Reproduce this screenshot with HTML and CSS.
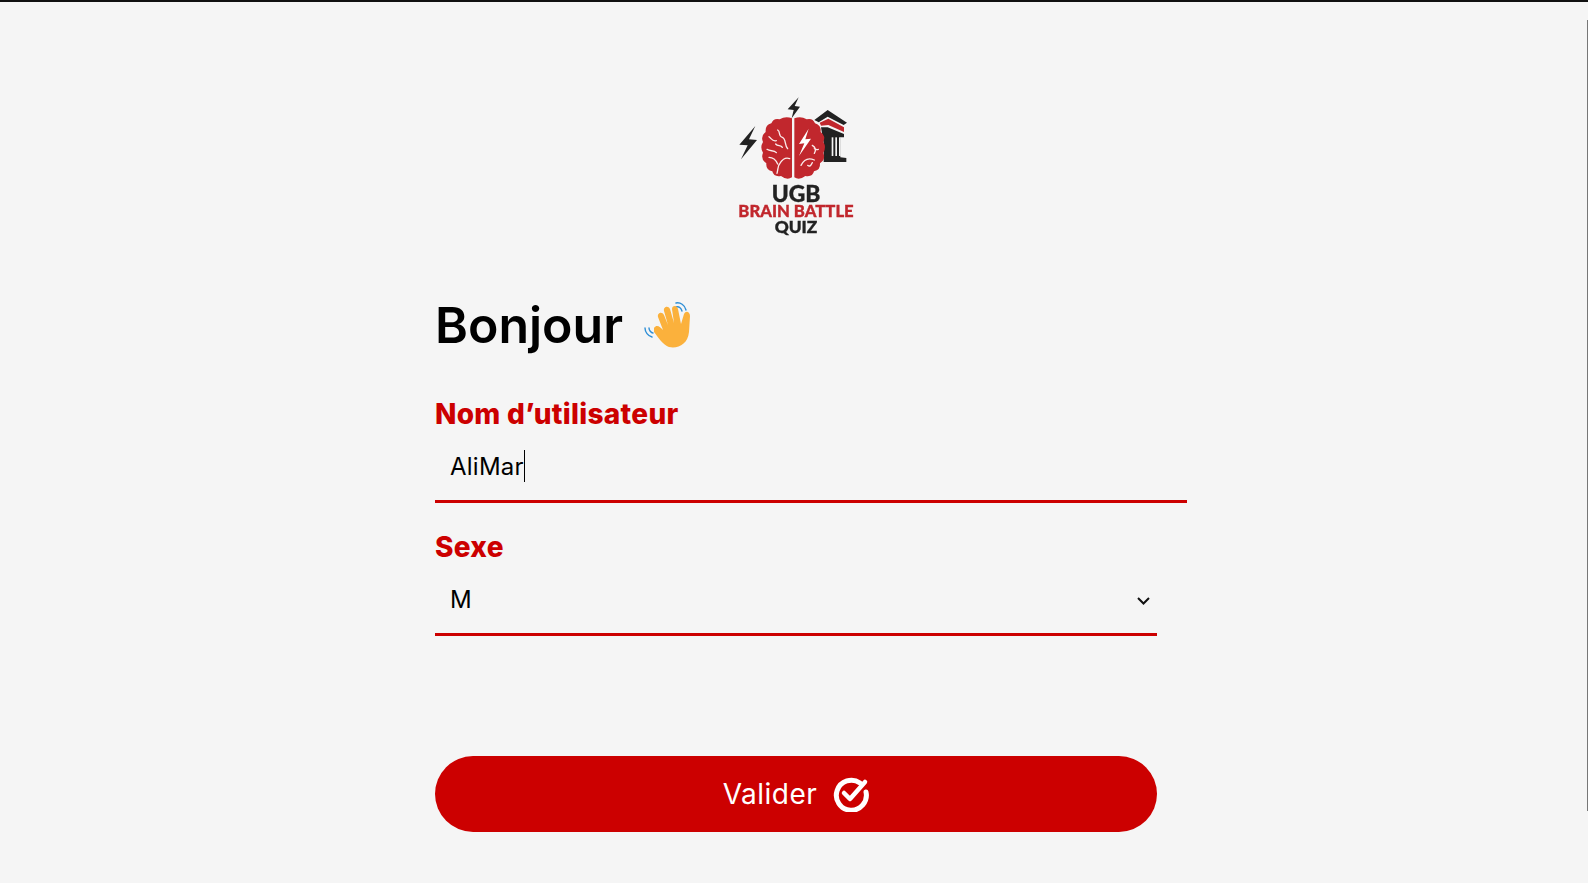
FILE: index.html
```html
<!DOCTYPE html>
<html lang="fr">
<head>
    <meta charset="UTF-8">
    <meta name="viewport" content="width=device-width, initial-scale=1.0">
    <title>UGB Brain Battle Quiz</title>
    <link rel="stylesheet" href="styles.css">
</head>
<body>

    <div class="scroll-line"></div>

    <div class="container">

        <!-- Logo -->
        <svg class="logo" viewBox="117 0 400 570" role="img" aria-label="UGB Brain Battle Quiz">
            <polygon fill="#222" points="195,168 147,224 172,226 152,268 200,210 176,208"/>
            <polygon fill="#222" points="325,82 292,118 310,120 304,145 329,110 313,108"/>
            <path fill="#222" d="M372,150 L412,120 L470,158 L460,165 L412,140 L385,157 Z"/>
            <path fill="#c1272d" d="M388,158 L414,146 L461,172 L461,186 L414,165 L392,167 Z"/>
            <path fill="#222" d="M392,172 L412,172 L461,192 L461,202 L450,202 L450,262 L468,264 L468,276 L400,276 L400,220 Z"/>
            <g fill="#f5f5f5">
                <rect x="424" y="202" width="5" height="56"/>
                <rect x="435" y="202" width="5" height="56"/>
                <rect x="446" y="202" width="5" height="56"/>
            </g>
            <path fill="#c1272d" d="M305,145 Q285,138 268,148 Q250,143 243,160 Q224,165 226,186 Q210,198 218,216 Q208,232 218,248 Q210,268 228,280 Q226,300 246,304 Q250,322 272,318 Q290,332 305,322 Z"/>
            <path fill="#c1272d" d="M312,145 Q332,138 349,148 Q367,143 374,160 Q393,165 391,186 Q407,198 399,216 Q409,232 399,248 Q407,268 389,280 Q391,300 371,304 Q367,322 345,318 Q327,332 312,322 Z"/>
            <g fill="none" stroke="#fbeaea" stroke-width="4" stroke-linecap="round">
                <path d="M262,180 C272,186 262,198 276,202 C288,206 282,226 292,236"/>
                <path d="M236,200 C244,206 246,216 258,212 M256,222 C262,230 272,224 276,232"/>
                <path d="M230,238 C240,246 250,238 258,248 M236,262 C248,262 256,268 262,282 M260,310 C264,296 262,286 270,278 C278,266 288,262 298,266"/>
                <path d="M366,226 C376,232 378,240 372,250 M384,238 C378,240 376,238 372,236 M332,286 C340,270 354,262 372,270 M352,286 C360,292 362,284 366,278"/>
            </g>
            <polygon fill="#fff" points="355,176 326,222 342,220 326,258 362,206 345,208"/>
            <text class="logo-big" x="317" y="395" textLength="146" lengthAdjust="spacingAndGlyphs">UGB</text>
            <text class="logo-red" x="317" y="441" textLength="346" lengthAdjust="spacingAndGlyphs">BRAIN BATTLE</text>
            <text class="logo-small" x="317" y="490" textLength="128" lengthAdjust="spacingAndGlyphs">QUIZ</text>
        </svg>

        <h1>Bonjour
            <svg class="wave" viewBox="0 0 50 50">
                <g fill="none" stroke="#2f8fd6" stroke-width="1.4" stroke-linecap="round">
                    <path d="M33,3 C37,2 42,5 43,10"/>
                    <path d="M33,7 C36,6 38,8 39,11"/>
                    <path d="M2,28 C2,32 5,36 9,37"/>
                    <path d="M6,28 C6,30 8,33 10,33"/>
                </g>
                <path fill="#fbb13c" d="M11,28 C14,24 17,27 20,30 L15,17 C14,13 19,11 21,15 L25,25 L21,11 C20,7 25,5 27,9 L31,23 L29,9 C29,5 34,5 35,9 L38,24 L41,14 C43,10 47,12 47,16 L46,32 C45,44 35,49 26,47 C20,45 15,37 11,32 Z"/>
            </svg>
        </h1>

        <form>
            <div class="form-group">
                <label for="username">Nom d’utilisateur</label>
                <div class="field">
                    <input type="text" id="username" class="wide" value="AliMar">
                    <span class="caret"></span>
                </div>
            </div>

            <div class="form-group">
                <label for="sexe">Sexe</label>
                <select id="sexe">
                    <option>M</option>
                    <option>F</option>
                </select>
            </div>

            <button type="button">
                Valider
                <svg class="check" viewBox="0 0 36 36">
                    <path fill="none" stroke="#fff" stroke-width="5" stroke-linecap="round" d="M27,7 A15,15 0 1 0 33,16"/>
                    <path fill="none" stroke="#fff" stroke-width="4.5" stroke-linecap="round" stroke-linejoin="round" d="M11,17 L17,23 L32,6"/>
                </svg>
            </button>
        </form>
    </div>

</body>
</html>
```

FILE: styles.css
```css
* {
    margin: 0;
    padding: 0;
    box-sizing: border-box;
}

html, body {
    height: 100%;
}

body {
    font-family: "Inter", "Liberation Sans", sans-serif;
    background-color: #f5f5f5;
    color: #000;
    border-top: 2px solid #111;
    overflow: hidden;
}

/* Thin scrollbar thumb on the right edge */
.scroll-line {
    position: fixed;
    top: 20px;
    right: 0;
    width: 1px;
    height: 791px;
    background-color: #777;
}

.container {
    width: 722px;
    margin-left: 435px;
    padding-top: 68px;
}

.logo {
    display: block;
    width: 134px;
    height: 190px;
    margin: 0 auto;
    filter: blur(0.3px);
}

.logo text {
    font-family: "Lato", sans-serif;
    font-weight: 900;
    text-anchor: middle;
    stroke-width: 1px;
}

.logo-big {
    font-size: 66px;
    fill: #222;
    stroke: #222;
}

.logo-red {
    font-size: 48px;
    fill: #c1272d;
    stroke: #c1272d;
}

.logo-small {
    font-size: 48px;
    fill: #222;
    stroke: #222;
}

h1 {
    display: flex;
    align-items: center;
    gap: 20px;
    height: 64px;
    margin-top: 33px;
    font-size: 50px;
    font-weight: 600;
}

.wave {
    width: 50px;
    height: 50px;
}

form {
    padding-top: 40px;
}

.form-group {
    margin-bottom: 27px;
}

label {
    display: block;
    margin-bottom: 8px;
    color: #cc0000;
    font-size: 28px;
    font-weight: 800;
    letter-spacing: 0.3px;
}

.field {
    position: relative;
}

input, select {
    display: block;
    width: 100%;
    height: 64px;
    padding-left: 15px;
    padding-bottom: 6px;
    font-family: inherit;
    font-size: 24px;
    color: #000;
    background: transparent;
    border: none;
    border-bottom: 3px solid #cc0000;
    outline: none;
}

input.wide {
    width: 752px;
    letter-spacing: 0.25px;
}

/* Text cursor after the typed name */
.caret {
    position: absolute;
    top: 11px;
    left: 89px;
    width: 1px;
    height: 32px;
    background-color: #000;
}

select {
    appearance: none;
    background-image: url("data:image/svg+xml,%3Csvg xmlns='http://www.w3.org/2000/svg' width='13' height='8' viewBox='0 0 13 8'%3E%3Cpath fill='none' stroke='%23111' stroke-width='2' d='M1 1l5.5 5.5L12 1'/%3E%3C/svg%3E");
    background-repeat: no-repeat;
    background-position: right 7px top 25px;
}

button {
    display: flex;
    justify-content: center;
    align-items: center;
    gap: 16px;
    width: 100%;
    height: 76px;
    margin-top: 120px;
    background-color: #cc0000;
    color: #fff;
    border: none;
    border-radius: 38px;
    font-family: inherit;
    font-size: 28px;
    letter-spacing: 0.5px;
}

.check {
    width: 36px;
    height: 36px;
}
```
